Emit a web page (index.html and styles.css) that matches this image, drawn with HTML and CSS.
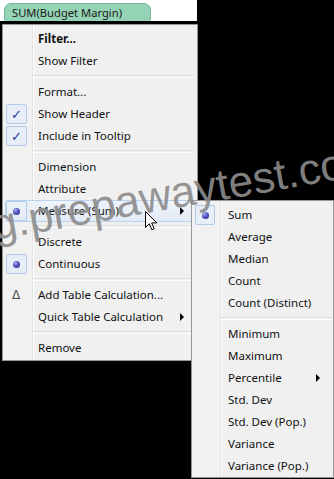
FILE: index.html
```html
<!DOCTYPE html>
<html>
<head>
<meta charset="utf-8">
<link rel="stylesheet" href="styles.css">
</head>
<body>
<div class="top"><span class="pill">SUM(Budget Margin)</span></div>

<div class="menu main">
  <div class="item"><span class="gut"></span><span class="label bold">Filter...</span></div>
  <div class="item"><span class="gut"></span><span class="label">Show Filter</span></div>
  <div class="sep"></div>
  <div class="item"><span class="gut"></span><span class="label">Format...</span></div>
  <div class="item"><span class="gut"><span class="box"><span class="check">&#10003;</span></span></span><span class="label">Show Header</span></div>
  <div class="item"><span class="gut"><span class="box"><span class="check">&#10003;</span></span></span><span class="label">Include in Tooltip</span></div>
  <div class="sep"></div>
  <div class="item"><span class="gut"></span><span class="label">Dimension</span></div>
  <div class="item"><span class="gut"></span><span class="label">Attribute</span></div>
  <div class="item hot"><span class="gut"><span class="box plain"><span class="dot"></span></span></span><span class="label">Measure (Sum)</span><span class="arrow"></span></div>
  <div class="sep"></div>
  <div class="item"><span class="gut"></span><span class="label">Discrete</span></div>
  <div class="item"><span class="gut"><span class="box"><span class="dot"></span></span></span><span class="label">Continuous</span></div>
  <div class="sep"></div>
  <div class="item"><span class="gut"><span class="delta">&#916;</span></span><span class="label">Add Table Calculation...</span></div>
  <div class="item"><span class="gut"></span><span class="label">Quick Table Calculation</span><span class="arrow"></span></div>
  <div class="sep"></div>
  <div class="item"><span class="gut"></span><span class="label">Remove</span></div>
</div>

<div class="menu sub">
  <div class="item"><span class="gut"><span class="box"><span class="dot"></span></span></span><span class="label">Sum</span></div>
  <div class="item"><span class="gut"></span><span class="label">Average</span></div>
  <div class="item"><span class="gut"></span><span class="label">Median</span></div>
  <div class="item"><span class="gut"></span><span class="label">Count</span></div>
  <div class="item"><span class="gut"></span><span class="label">Count (Distinct)</span></div>
  <div class="sep"></div>
  <div class="item"><span class="gut"></span><span class="label">Minimum</span></div>
  <div class="item"><span class="gut"></span><span class="label">Maximum</span></div>
  <div class="item"><span class="gut"></span><span class="label">Percentile</span><span class="arrow"></span></div>
  <div class="item"><span class="gut"></span><span class="label">Std. Dev</span></div>
  <div class="item"><span class="gut"></span><span class="label">Std. Dev (Pop.)</span></div>
  <div class="item"><span class="gut"></span><span class="label">Variance</span></div>
  <div class="item"><span class="gut"></span><span class="label">Variance (Pop.)</span></div>
</div>

<svg class="cursor" width="13" height="21" viewBox="0 0 13 21">
  <path d="M0.5 0.5 L0.5 16.5 L4.3 12.8 L6.8 18.8 L9.2 17.8 L6.7 11.9 L11.8 11.9 Z" fill="#fff" stroke="#000" stroke-width="1" stroke-linejoin="miter"/>
</svg>

<div class="watermark">g.prepawaytest.co</div>
</body>
</html>
```

FILE: styles.css
```css
html, body {
  margin: 0;
  padding: 0;
}
body {
  width: 334px;
  height: 479px;
  background: #000;
  overflow: hidden;
  position: relative;
  font-family: "Noto Sans", "Open Sans", sans-serif;
  font-size: 11.5px;
  color: #111;
}
.top {
  width: 197px;
  height: 21px;
  background: #fff;
  padding: 3px 0 0 4px;
  box-sizing: border-box;
  overflow: hidden;
}
.pill {
  display: block;
  width: 147px;
  height: 22px;
  box-sizing: border-box;
  background: #95d3b6;
  border: 1px solid #74b89a;
  border-radius: 7px;
  padding-left: 7px;
  line-height: 18px;
  font-size: 11.2px;
  color: #1a1a1a;
}
.menu {
  box-sizing: border-box;
  border: 1px solid #979797;
  padding: 3px 2px 1px 2px;
}
.main {
  width: 196px;
  margin: 3px 0 0 2px;
  background: linear-gradient(to right, #f1f1f1 0, #f1f1f1 29px, #e2e3e3 29px, #e2e3e3 30px, #fff 30px, #fff 31px, #f0f0f0 31px);
}
.sub {
  position: absolute;
  left: 191px;
  top: 200px;
  width: 143px;
  padding-bottom: 0;
  background: linear-gradient(to right, #f1f1f1 0, #f1f1f1 28px, #e2e3e3 28px, #e2e3e3 29px, #fff 29px, #fff 30px, #f0f0f0 30px);
}
.item {
  display: flex;
  align-items: center;
  height: 22px;
  box-sizing: border-box;
  position: relative;
}
.item.hot {
  border: 1px solid #b9d2ef;
  border-radius: 3px;
  background: linear-gradient(to bottom, #eef3fa, #e3ebf6);
}
.gut {
  display: flex;
  align-items: center;
  justify-content: flex-start;
  height: 22px;
  flex: none;
}
.main .gut { width: 27px; }
.sub .gut { width: 26px; }
.main .label { margin-left: 6px; }
.sub .label { margin-left: 8px; }
.hot .gut { margin-left: -1px; }
.label {
  white-space: nowrap;
  line-height: 22px;
}
.bold { font-weight: bold; }
.box {
  margin-left: 1px;
  width: 21px;
  height: 20px;
  box-sizing: border-box;
  border: 1px solid #b3cbea;
  border-radius: 2px;
  background: #e8eef7;
  display: flex;
  align-items: center;
  justify-content: center;
}
.sub .box { width: 20px; }
.box.plain {
  background: transparent;
}
.check {
  color: #1f3c99;
  font-family: "DejaVu Sans", sans-serif;
  font-size: 13px;
  font-weight: bold;
  line-height: 1;
}
.dot {
  width: 7px;
  height: 7px;
  border-radius: 50%;
  background: radial-gradient(circle at 35% 30%, #a7a7ea 0, #5555c0 45%, #24247a 100%);
}
.delta {
  margin-left: 7px;
  color: #4a4a4a;
  font-family: "DejaVu Sans", sans-serif;
  font-size: 12px;
}
.arrow {
  position: absolute;
  width: 0;
  height: 0;
  border-top: 4px solid transparent;
  border-bottom: 4px solid transparent;
  border-left: 4px solid #000;
  top: 7px;
}
.main .arrow { left: 175px; }
.hot .arrow { left: 174px; top: 6px; }
.sub .arrow { left: 122px; }
.sep {
  height: 1px;
  border-top: 1px solid #e0e0e0;
  border-bottom: 1px solid #fff;
  margin: 3px 0 3px 28px;
}
.main .sep { margin-right: 1px; }
.sub .sep { margin-left: 27px; }
.cursor {
  position: absolute;
  left: 145px;
  top: 211px;
}
.watermark {
  position: absolute;
  left: -5px;
  top: 203px;
  font-family: "Liberation Sans", Arial, sans-serif;
  font-size: 44px;
  line-height: 1;
  white-space: nowrap;
  color: rgba(140, 140, 140, 0.92);
  transform-origin: 0 37px;
  transform: rotate(-10deg);
  pointer-events: none;
}
```
